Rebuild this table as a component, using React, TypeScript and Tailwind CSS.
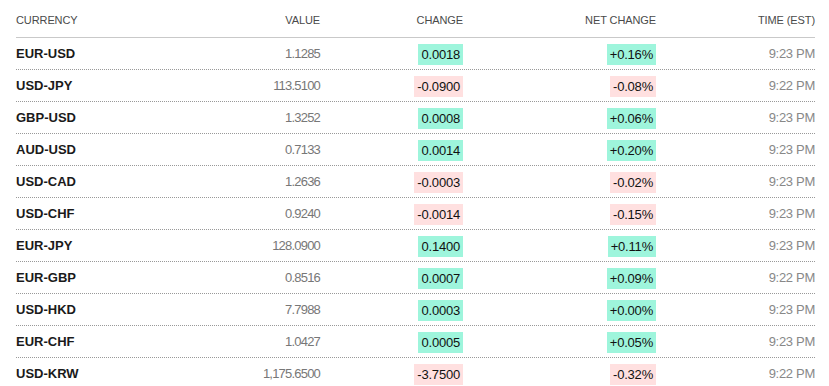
const rows = [
  { pair: 'EUR-USD', value: '1.1285', change: '0.0018', net: '+0.16%', time: '9:23 PM' },
  { pair: 'USD-JPY', value: '113.5100', change: '-0.0900', net: '-0.08%', time: '9:22 PM' },
  { pair: 'GBP-USD', value: '1.3252', change: '0.0008', net: '+0.06%', time: '9:23 PM' },
  { pair: 'AUD-USD', value: '0.7133', change: '0.0014', net: '+0.20%', time: '9:23 PM' },
  { pair: 'USD-CAD', value: '1.2636', change: '-0.0003', net: '-0.02%', time: '9:23 PM' },
  { pair: 'USD-CHF', value: '0.9240', change: '-0.0014', net: '-0.15%', time: '9:23 PM' },
  { pair: 'EUR-JPY', value: '128.0900', change: '0.1400', net: '+0.11%', time: '9:23 PM' },
  { pair: 'EUR-GBP', value: '0.8516', change: '0.0007', net: '+0.09%', time: '9:22 PM' },
  { pair: 'USD-HKD', value: '7.7988', change: '0.0003', net: '+0.00%', time: '9:23 PM' },
  { pair: 'EUR-CHF', value: '1.0427', change: '0.0005', net: '+0.05%', time: '9:23 PM' },
  { pair: 'USD-KRW', value: '1,175.6500', change: '-3.7500', net: '-0.32%', time: '9:22 PM' },
]

const cols = 'grid grid-cols-[150px_154px_143px_193px_159px]'

function Badge({ text }: { text: string }) {
  const down = text.startsWith('-')
  return (
    <span
      className={`inline-block h-[21px] px-[3px] text-[13px] leading-[21px] tracking-[-0.2px] text-[#111] ${
        down ? 'bg-[#ffe0e0]' : 'bg-[#9ef5dc]'
      }`}
    >
      {text}
    </span>
  )
}

export default function App() {
  return (
    <div className="min-h-screen bg-white px-4 font-['Liberation_Sans',Arial,sans-serif]">
      <div className="w-[799px]">
        <div
          className={`${cols} h-[38px] items-center border-b border-[#c9c9c9] pt-[3px] text-[11px] uppercase tracking-[-0.1px] text-[#4a4a4a]`}
        >
          <div>Currency</div>
          <div className="text-right">Value</div>
          <div className="text-right">Change</div>
          <div className="text-right">Net Change</div>
          <div className="text-right">Time (EST)</div>
        </div>
        {rows.map((r) => (
          <div
            key={r.pair}
            className={`${cols} h-[32px] items-center border-b border-dotted border-[#999]`}
          >
            <div className="text-[13px] font-bold text-[#1a1a1a]">{r.pair}</div>
            <div className="text-right text-[13px] tracking-[-0.8px] text-[#777]">{r.value}</div>
            <div className="text-right">
              <Badge text={r.change} />
            </div>
            <div className="text-right">
              <Badge text={r.net} />
            </div>
            <div className="text-right text-[13px] tracking-[-0.3px] text-[#888]">{r.time}</div>
          </div>
        ))}
      </div>
    </div>
  )
}
